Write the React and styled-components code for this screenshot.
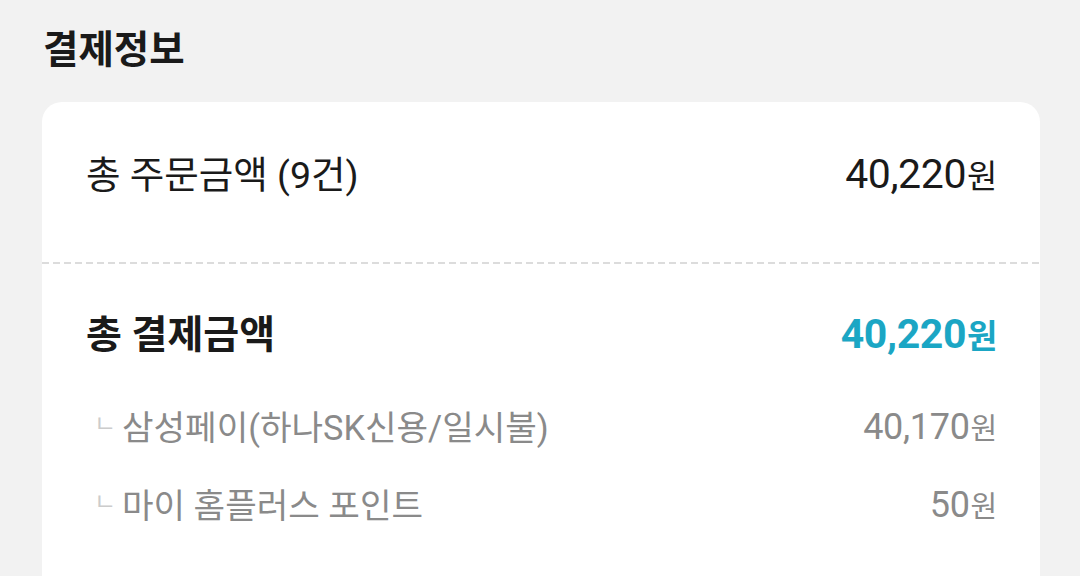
import React from 'react';
import styled, { createGlobalStyle } from 'styled-components';

const GlobalStyle = createGlobalStyle`
  body {
    margin: 0;
    background: #f2f2f2;
    font-family: Roboto, "Noto Sans CJK KR", sans-serif;
  }
`;

const Page = styled.div`
  padding: 28px 40px 0 42px;
`;

const Title = styled.h2`
  margin: 0 0 30px 1px;
  font-size: 38.5px;
  line-height: 44px;
  font-weight: 700;
  color: #1a1a1a;
`;

const Card = styled.section`
  background: #fff;
  border-radius: 20px 20px 0 0;
  padding-bottom: 100px;
`;

const Row = styled.div`
  display: flex;
  justify-content: space-between;
  align-items: center;
  height: 46px;
  padding: ${(p) => p.$pad};
`;

const Label = styled.span`
  font-size: ${(p) => (p.$bold ? '39px' : '37.5px')};
  line-height: 46px;
  font-weight: ${(p) => (p.$bold ? 700 : 400)};
  color: #1a1a1a;
`;

const Price = styled.span`
  display: flex;
  align-items: baseline;
  font-size: 41px;
  line-height: 46px;
  font-weight: ${(p) => (p.$bold ? 700 : 400)};
  color: ${(p) => p.$color || '#1a1a1a'};
  letter-spacing: -0.4px;
`;

const Won = styled.span`
  font-size: 33px;
  margin-left: 1px;
`;

const Divider = styled.div`
  height: 2px;
  background: repeating-linear-gradient(to right, #dcdcdc 0 7px, transparent 7px 11px);
`;

const SubList = styled.div`
  display: flex;
  flex-direction: column;
  gap: 34px;
  padding: 48px 43px 0 52px;
`;

const SubRow = styled.div`
  display: flex;
  align-items: center;
  height: 44px;
`;

const Corner = styled.span`
  font-size: 24px;
  line-height: 24px;
  color: #cccccc;
  width: 28px;
  margin-top: -8px;
`;

const SubLabel = styled.span`
  flex: 1;
  font-size: 34.3px;
  line-height: 44px;
  color: #8a8a8a;
`;

const SubPrice = styled.span`
  display: flex;
  align-items: baseline;
  font-size: 36px;
  line-height: 44px;
  color: #8a8a8a;
  letter-spacing: -0.3px;
`;

const SubWon = styled.span`
  font-size: 29px;
  margin-left: 1px;
`;

const payments = [
  { label: '삼성페이(하나SK신용/일시불)', amount: '40,170' },
  { label: '마이 홈플러스 포인트', amount: '50' },
];

export default function App() {
  return (
    <Page>
      <GlobalStyle />
      <Title>결제정보</Title>
      <Card>
        <Row $pad="50px 43px 64px 44px">
          <Label>총 주문금액 (9건)</Label>
          <Price>
            40,220<Won>원</Won>
          </Price>
        </Row>
        <Divider />
        <Row $pad="48px 43px 0 44px">
          <Label $bold>총 결제금액</Label>
          <Price $bold $color="#1ba6c4">
            40,220<Won>원</Won>
          </Price>
        </Row>
        <SubList>
          {payments.map((p) => (
            <SubRow key={p.label}>
              <Corner>ㄴ</Corner>
              <SubLabel>{p.label}</SubLabel>
              <SubPrice>
                {p.amount}
                <SubWon>원</SubWon>
              </SubPrice>
            </SubRow>
          ))}
        </SubList>
      </Card>
    </Page>
  );
}
